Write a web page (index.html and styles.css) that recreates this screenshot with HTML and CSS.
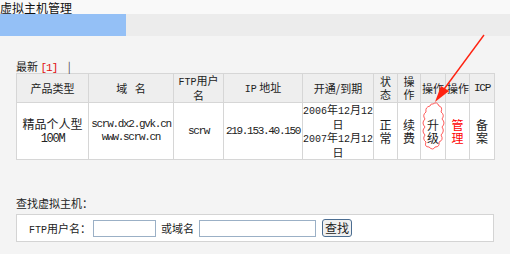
FILE: index.html
```html
<!DOCTYPE html>
<html lang="zh-CN">
<head>
    <meta charset="UTF-8">
    <title>虚拟主机管理</title>
    <link rel="stylesheet" href="styles.css">
</head>
<body>
<!--标题-->
<div class="title">虚拟主机管理</div>
<div class="tabbar">
    <div class="tab"></div>
</div>
<div class="main">
    <div class="latest">最新 <span class="red">[1]</span> <span class="sep">|</span></div>
    <!--主机列表-->
    <table class="list">
        <colgroup>
            <col style="width:72px">
            <col style="width:85px">
            <col style="width:50px">
            <col style="width:79px">
            <col style="width:71px">
            <col style="width:24px">
            <col style="width:23px">
            <col style="width:25px">
            <col style="width:24px">
            <col style="width:25px">
        </colgroup>
        <tr class="head">
            <th>产品类型</th>
            <th>域&nbsp;&nbsp;&nbsp;名</th>
            <th><span class="num">FTP</span>用户名</th>
            <th><span class="num">IP</span> 地址</th>
            <th>开通/到期</th>
            <th>状态</th>
            <th>操作</th>
            <th>操作</th>
            <th class="nowrap">操作</th>
            <th class="en">ICP</th>
        </tr>
        <tr class="row">
            <td>精品个人型<br><span class="en">100M</span></td>
            <td class="en nw">scrw.dx2.gvk.cn<br>www.scrw.cn</td>
            <td class="en nw">scrw</td>
            <td class="en nw">219.153.40.150</td>
            <td class="date"><span class="num">2006</span>年<span class="num">12</span>月<span class="num">12</span><br>日<br><span class="num">2007</span>年<span class="num">12</span>月<span class="num">12</span><br>日</td>
            <td>正常</td>
            <td>续费</td>
            <td>升级</td>
            <td class="manage">管理</td>
            <td>备案</td>
        </tr>
    </table>

    <!--查找-->
    <div class="search-title">查找虚拟主机：</div>
    <div class="search-box">
        <span class="label"><span class="num">FTP</span>用户名：</span>
        <input type="text" class="ipt">
        <span class="label2">或域名</span>
        <input type="text" class="ipt ipt2">
        <button class="btn">查找</button>
    </div>
</div>
<!--标注箭头-->
<svg class="mark" width="510" height="254" viewBox="0 0 510 254">
    <line x1="484" y1="35" x2="439" y2="96" stroke="#f21" stroke-width="1.4"/>
    <polygon points="435,102 441,86 449,91" fill="#f21"/>
    <path d="M433,104 q4,-3 6,2 q4,1 2,6 q4,3 1,7 q4,4 0,8 q3,4 -1,8 q3,5 -2,7 q1,5 -4,5 q-2,4 -6,0 q-5,0 -3,-5 q-4,-3 -1,-7 q-4,-4 0,-8 q-4,-4 0,-8 q-3,-4 1,-7 q-1,-5 4,-6 q1,-3 3,-2z" fill="none" stroke="#f33" stroke-width="0.8"/>
</svg>
</body>
</html>
```
FILE: styles.css
```css
*{
    margin: 0;
    padding: 0;
}
body{
    background-color: #f4f4f4;
    font-family: "Noto Sans CJK SC", sans-serif;
    font-size: 11px;
    color: #222;
    width: 510px;
    height: 254px;
    overflow: hidden;
    position: relative;
}
.title{
    height: 14px;
    line-height: 15px;
    font-size: 12px;
    background-color: #f9f9f9;
    color: #111;
}
.tabbar{
    height: 22px;
    background-color: #ececec;
}
.tab{
    width: 126px;
    height: 22px;
    background-color: #94c0f6;
}
.main{
    padding: 0 16px;
}
.en{
    font-family: "Liberation Mono", monospace;
    letter-spacing: -1.3px;
}
.latest{
    margin-top: 24px;
    height: 13px;
    line-height: 13px;
}
.red{
    color: #e01010;
    font-family: "Liberation Mono", monospace;
    letter-spacing: -1px;
}
.sep{
    margin-left: 8px;
    color: #444;
}
.list{
    width: 478px;
    table-layout: fixed;
    border-collapse: collapse;
    border: 1px solid #d6d6d6;
}
.list th,.list td{
    border: 1px solid #d6d6d6;
    text-align: center;
    line-height: 13px;
    font-weight: normal;
    word-break: break-all;
    padding: 0 1px;
}
.head th{
    height: 28px;
    background-color: #eeeeee;
}
.row td{
    height: 53px;
    background-color: #fff;
    font-size: 12px;
}
.row td.en{
    font-size: 11px;
}
.nw{
    white-space: nowrap;
}
.list td.date{
    padding: 0;
    white-space: nowrap;
    font-size: 11px;
}
.num{
    font-family: "Liberation Mono", monospace;
    font-size: 10px;
}
.nowrap{
    white-space: nowrap;
    padding: 0;
}
.manage{
    color: #f00;
    font-weight: bold;
}
.search-title{
    margin-top: 37px;
    height: 15px;
    line-height: 13px;
}
.search-box{
    margin-top: 2px;
    height: 26px;
    border: 1px solid #d4d4d4;
    background-color: #fff;
    display: flex;
    align-items: center;
}
.label{
    margin-left: 12px;
    width: 64px;
}
.ipt{
    width: 63px;
    height: 17px;
    border: 1px solid #9bb0c6;
    background-color: #fff;
    box-sizing: border-box;
}
.label2{
    margin-left: 5px;
    width: 38px;
}
.ipt2{
    width: 117px;
}
.btn{
    margin-left: 6px;
    width: 30px;
    height: 18px;
    border: 1px solid #4b6d91;
    border-radius: 3px;
    background-color: #f0f0f0;
    font-family: "Noto Sans CJK SC", sans-serif;
    font-size: 12px;
    line-height: 14px;
    color: #222;
}
.mark{
    position: absolute;
    left: 0;
    top: 0;
    pointer-events: none;
}
```
